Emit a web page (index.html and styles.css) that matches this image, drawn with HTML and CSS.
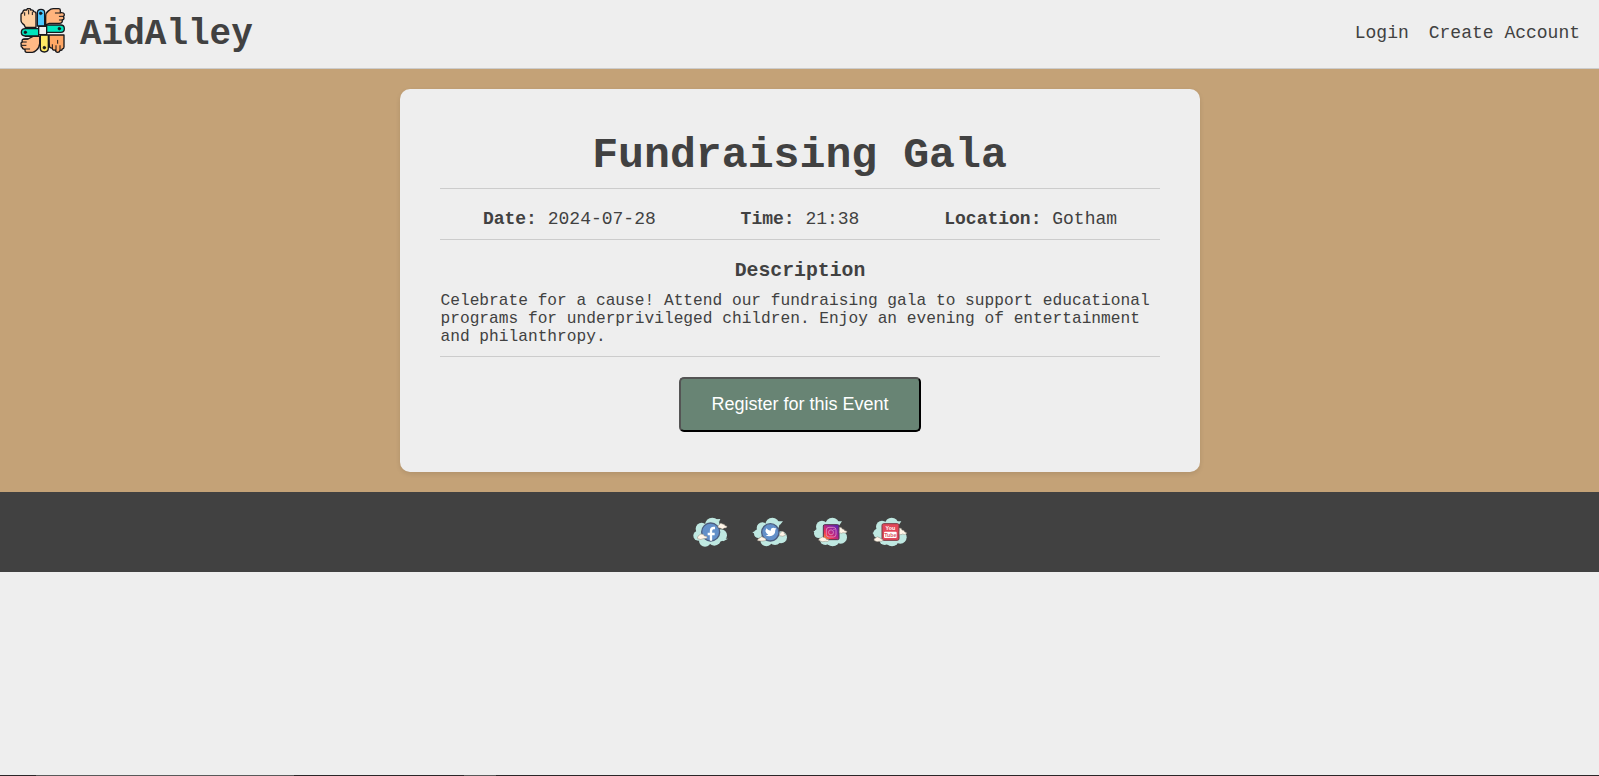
FILE: index.html
```html
<!DOCTYPE html>
<html lang="en">
<head>
<meta charset="utf-8">
<title>AidAlley - Fundraising Gala</title>
<link rel="stylesheet" href="styles.css">
</head>
<body>
<header class="header">
  <a class="brand">
    <svg class="brand-logo" viewBox="30 24 135 135" stroke="#17181c" stroke-width="4" stroke-linejoin="round" stroke-linecap="round">
      <path fill="#ffd0a1" d="M33 44q0-5 5-5 1-9 6-9 5 0 6 0 1-5 6-5 6 0 6 5 9-1 9 5 7 0 7 6V82H46q-2-8-9-12-4-3-4-9Z"/>
      <path fill="none" stroke-width="3" d="M44 38v8M56 30v12M67 36v8"/>
      <path fill="#ffb47d" d="M107 50q0-12 9-18 6-6 14-6h16q5 0 5 5v7q12-1 12 6 0 4-3 5 5 9-3 11 1 10-9 10h-30q-8 2-11 7Z"/>
      <path fill="none" stroke-width="3" d="M136 39h15M148 49h12M148 60h9"/>
      <path fill="#ffa765" d="M117 105h45v36q0 5-5 6-1 5-7 4-1 6-7 6-6 0-7-7-9 2-9-5-9-1-9-6Z"/>
      <path fill="none" stroke-width="3" d="M150 149v-12M138 151v-14M127 143v-9M143 130v-9"/>
      <path fill="#ffb985" d="M46 109h43v22q-1 13-10 20-6 6-12 6H50q-5 0-5-6v-3q-8 0-8-6-5-2-3-7-3-7 3-9-3-10 9-9h8l15-8Z"/>
      <path fill="none" stroke-width="3" d="M39 126h10M36 136h12M45 147h14M54 117l-14 1"/>
      <path fill="#4bc8ff" d="M82 78V38q0-10 11-10t11 10v40Z"/>
      <path fill="#00e5bd" d="M109 75h43q11 0 11 11t-11 11h-43Z"/>
      <path fill="#00e5bd" d="M86 86H46q-12 0-12 11t12 11h40Z"/>
      <path fill="#ffea64" d="M91 105h24v40q0 11-12 11t-12-11Z"/>
      <rect fill="#eee" x="86" y="79" width="24" height="25"/>
      <g fill="#17181c" stroke-width="2">
        <circle cx="92" cy="40" r="4"/>
        <circle cx="148" cy="86" r="4"/>
        <circle cx="46" cy="97" r="4"/>
        <circle cx="103" cy="143" r="4"/>
      </g>
    </svg>
    <span class="brand-name">AidAlley</span>
  </a>
  <nav class="nav"><a>Login</a><a>Create Account</a></nav>
</header>
<main class="main">
  <article class="card">
    <h1 class="title">Fundraising Gala</h1>
    <div class="details">
      <p><strong>Date:</strong> 2024-07-28</p>
      <p><strong>Time:</strong> 21:38</p>
      <p><strong>Location:</strong> Gotham</p>
    </div>
    <section class="description">
      <h2>Description</h2>
      <p>Celebrate for a cause! Attend our fundraising gala to support educational programs for underprivileged children. Enjoy an evening of entertainment and philanthropy.</p>
    </section>
    <button class="register">Register for this Event</button>
  </article>
</main>
<footer class="footer">
  <svg class="social" viewBox="15 6 120 120">
    <g class="cloud">
      <circle cx="82" cy="45" r="22"/><circle cx="50" cy="56" r="18"/><circle cx="40" cy="77" r="15"/>
      <circle cx="60" cy="92" r="18"/><circle cx="88" cy="86" r="21"/><circle cx="108" cy="76" r="18"/>
      <path d="M112 86h17l-14 8ZM92 28l14-1-4 10Z"/>
    </g>
    <circle class="disc" cx="77" cy="66" r="27"/>
    <path fill="none" stroke="#fff" stroke-width="7" d="M90 54h-4q-8 0-8 9v29M68 72h21"/>
    <path class="puff" d="M100 53q-4-6 3-9 3-7 10-2 7 0 7 5 7 0 6 4-2 4-8 3-6 6-11 1Z"/>
    <path class="puff" d="M38 86q-3-7 4-9 3-8 11-4 5 1 5 5 9 0 9 4-2 5-12 4-7 5-17 0Z"/>
  </svg>
  <svg class="social" viewBox="195 6 120 120">
    <g class="cloud">
      <circle cx="262" cy="44" r="21"/><circle cx="232" cy="54" r="17"/><circle cx="220" cy="71" r="13"/>
      <circle cx="244" cy="91" r="18"/><circle cx="270" cy="85" r="20"/><circle cx="288" cy="82" r="18"/>
      <path d="M202 67l16-6-4 14ZM276 34h18l-10 12Z"/>
    </g>
    <circle class="disc" cx="256" cy="67" r="26"/>
    <path fill="#fff" d="M244 55q6 7 13 7 0-9 8-9 3 0 5 2h4l-3 5q0 18-18 19-7 0-11-3 6 0 8-3-5-1-6-4-5-7 0-14Z"/>
    <path class="puff" d="M283 77q-1-6 4-8 2-8 8-4 5 3 3 6 5 1 3 5-7 5-18 1Z"/>
    <path class="puff" d="M218 92q-1-7 6-8 5-7 12-1 8 1 7 7-5 5-25 2Z"/>
  </svg>
  <svg class="social" viewBox="30 6 120 120">
    <defs>
      <linearGradient id="insta" x1="0" y1="1" x2="1" y2="0">
        <stop offset="0" stop-color="#ffb232"/><stop offset=".3" stop-color="#ed2f54"/><stop offset=".6" stop-color="#a02499"/><stop offset="1" stop-color="#5324b5"/>
      </linearGradient>
    </defs>
    <g class="cloud">
      <circle cx="97" cy="44" r="21"/><circle cx="66" cy="50" r="18"/><circle cx="56" cy="70" r="14"/>
      <circle cx="76" cy="88" r="17"/><circle cx="98" cy="88" r="21"/><circle cx="122" cy="82" r="19"/>
      <path d="M40 64l16-4-4 14ZM110 34h16l-8 12Z"/>
    </g>
    <rect x="70" y="44" width="47" height="45" rx="4" fill="url(#insta)" stroke="#50334d" stroke-width="3"/>
    <rect x="79" y="52" width="29" height="29" rx="8" fill="none" stroke="#e08fc0" stroke-width="2.5"/>
    <circle cx="93" cy="67" r="7.5" fill="none" stroke="#e08fc0" stroke-width="2.5"/>
    <circle cx="102" cy="58" r="2" fill="#e08fc0"/>
    <path class="puff" d="M118 68V52q7-2 9 5 7 0 7 5 8 0 7 4-4 5-12 2-4 4-11 0Z"/>
    <path class="puff" d="M56 91q-1-6 6-7 4-6 12-1 5 1 5 5 8 0 8 3-3 5-11 3-8 4-20-3Z"/>
  </svg>
  <svg class="social" viewBox="210 6 120 120">
    <g class="cloud">
      <circle cx="275" cy="43" r="20"/><circle cx="246" cy="50" r="18"/><circle cx="234" cy="70" r="14"/>
      <circle cx="254" cy="88" r="17"/><circle cx="276" cy="88" r="21"/><circle cx="301" cy="82" r="19"/>
      <path d="M217 69l16-7-4 14ZM288 34h16l-8 12Z"/>
    </g>
    <rect x="246" y="41" width="51" height="50" rx="5" fill="#e24859" stroke="#793943" stroke-width="3"/>
    <text class="yt" x="271" y="61" fill="#fff">You</text>
    <rect x="252" y="65" width="38" height="19" rx="3" fill="#fff"/>
    <text class="yt" x="271" y="80" fill="#d85b68">Tube</text>
    <path class="puff" d="M298 73V54q7-1 8 6 8 0 8 6 7 0 5 5-5 5-11 1-5 4-10 1Z"/>
    <path class="puff" d="M222 91q-1-6 5-7 4-7 11-1 5 0 5 4 7 0 6 4-3 4-10 3-9 3-17-3Z"/>
  </svg>
</footer>
<div class="taskbar"><i></i><i></i></div>
</body>
</html>
```

FILE: styles.css
```css
* { box-sizing: border-box; }
body {
  margin: 0;
  min-height: 776px;
  display: flex;
  flex-direction: column;
  background: #eee;
  color: #414141;
  font: 18px "Courier New", "Liberation Mono", monospace;
}
h1, h2, p { margin: 0; }
.header {
  height: 69px;
  padding: 0 19px 0 20px;
  display: flex;
  justify-content: space-between;
  border-bottom: 1px solid #ccc;
}
.brand { display: flex; gap: 15px; padding-top: 8px; }
.brand-logo { width: 45px; height: 45px; }
.brand-name { padding-top: 3px; font-size: 36px; font-weight: bold; line-height: 48px; }
.nav { display: flex; gap: 20px; padding-top: 23px; line-height: 20px; }
.main { background: #c4a277; padding: 20px 0; display: flex; justify-content: center; }
.card {
  width: 800px;
  height: 383px;
  padding: 40px;
  background: #eee;
  border-radius: 10px;
  box-shadow: 0 2px 5px rgba(0, 0, 0, .1);
}
.title {
  height: 60px;
  padding-top: 3px;
  line-height: 48px;
  font-size: 43.2px;
  text-align: center;
  border-bottom: 1px solid #ccc;
}
.details {
  height: 51px;
  padding: 20px 0 0 1px;
  display: flex;
  justify-content: space-around;
  line-height: 20px;
  border-bottom: 1px solid #ccc;
}
.description { height: 117px; padding: 20px 0 0 1px; border-bottom: 1px solid #ccc; }
.description h2 { font-size: 19.8px; line-height: 22px; text-align: center; margin-bottom: 10px; }
.description p { font-size: 16.2px; line-height: 18px; }
.register {
  display: block;
  width: 242px;
  height: 55px;
  margin: 20px auto 0;
  padding: 0 0 0 1px;
  color: #fff;
  background: #688474;
  border: 2px outset #000;
  border-radius: 5px;
  font: 18px "Liberation Sans", Arial, sans-serif;
}
.footer { height: 80px; display: flex; justify-content: center; align-items: center; gap: 20px; background: #414141; }
.social { width: 40px; height: 40px; }
.cloud { fill: #bfe8e1; }
.disc { fill: #6390c9; stroke: #4b5b7d; stroke-width: 4; }
.puff { fill: #fff5e8; stroke: #8d867b; stroke-width: 1.5; }
.yt { font: bold 16px "Liberation Sans", Arial, sans-serif; text-anchor: middle; }
.taskbar {
  height: 1px;
  margin-top: auto;
  padding: 0 0 0 36px;
  display: flex;
  gap: 170px;
  background: #2b2628;
}
.taskbar i { width: 258px; background: #595959; }
.taskbar i + i { width: 32px; }
```
